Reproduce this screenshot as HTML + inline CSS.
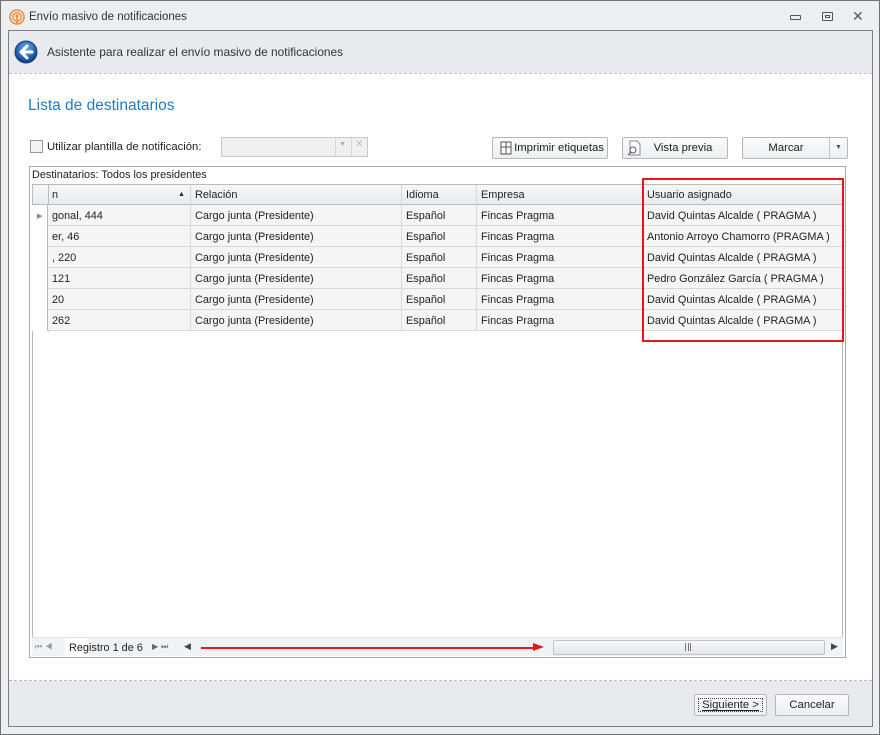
<!DOCTYPE html>
<html><head><meta charset="utf-8"><style>
*{box-sizing:border-box;margin:0;padding:0}
body{width:880px;height:735px;position:relative;background:#e8eaed;font-family:"Liberation Sans",sans-serif;font-size:11.3px;color:#222;overflow:hidden}
.a{position:absolute}
.btn{position:absolute;border:1px solid #b4b8be;border-radius:2px;background:linear-gradient(#fbfbfb,#eceef0);text-align:center;line-height:20px;font-size:11.3px;color:#222}
.row{position:absolute;left:32px;width:811px;height:21px;border-bottom:1px solid #d8d8d8;background:#f5f5f5}
.c{position:absolute;top:0;height:21px;line-height:22px;padding-left:4px;border-right:1px solid #d8d8d8;white-space:nowrap;overflow:hidden;font-size:10.9px}
</style></head><body>
<div class="a" style="left:0;top:0;width:880px;height:735px;border:1px solid #6e7277;background:#eceef0"></div>
<svg class="a" style="left:9px;top:9px" width="16" height="16"><circle cx="8" cy="8" r="7" fill="none" stroke="#f08a3c" stroke-width="1.6"/><circle cx="8" cy="8" r="4.3" fill="none" stroke="#f08a3c" stroke-width="1.4"/><circle cx="8" cy="7" r="1.6" fill="#f08a3c"/><rect x="7.2" y="8" width="1.6" height="7" fill="#f08a3c"/></svg>
<div class="a" style="left:29px;top:11px;font-size:11.5px;color:#333">Envío masivo de notificaciones</div>
<div class="a" style="left:790px;top:15px;width:11px;height:5px;border:1.3px solid #555;border-radius:1px"></div>
<div class="a" style="left:822px;top:12px;width:11px;height:9px;border:1.3px solid #555;border-radius:1px"><div style="margin:2px auto;width:5px;height:3px;border:1px solid #555"></div></div>
<div class="a" style="left:852px;top:8px;font-size:14px;color:#555">✕</div>
<div class="a" style="left:8px;top:30px;width:865px;height:697px;border:1px solid #7c8085;background:#e8eaed"></div>
<svg class="a" style="left:14px;top:40px" width="24" height="24"><defs><radialGradient id="g" cx="50%" cy="35%" r="60%"><stop offset="0" stop-color="#6fb3f5"/><stop offset="1" stop-color="#0d3f8f"/></radialGradient></defs><circle cx="12" cy="12" r="11" fill="url(#g)" stroke="#1a3f7a"/><path d="M13 6 L7 12 L13 18 M7 12 H18" stroke="#fff" stroke-width="3" fill="none" stroke-linecap="round" stroke-linejoin="round"/></svg>
<div class="a" style="left:47px;top:45px;font-size:11.9px;color:#333">Asistente para realizar el envío masivo de notificaciones</div>
<div class="a" style="left:9px;top:73px;width:863px;height:608px;background:#fff;border-top:1px dashed #c0c4c8;border-bottom:1px dashed #b8bcc0"></div>
<div class="a" style="left:28px;top:97px;font-size:15.5px;color:#1e7bc6">Lista de destinatarios</div>
<div class="a" style="left:30px;top:140px;width:13px;height:13px;border:1px solid #999;background:#f4f4f4"></div>
<div class="a" style="left:47px;top:141px">Utilizar plantilla de notificación:</div>
<div class="a" style="left:221px;top:137px;width:147px;height:20px;border:1px solid #c8c8c8;background:#f0f0f0"></div>
<div class="a" style="left:335px;top:138px;width:1px;height:18px;background:#d8d8d8"></div>
<div class="a" style="left:351px;top:138px;width:1px;height:18px;background:#d8d8d8"></div>
<div class="a" style="left:339px;top:141px;font-size:7px;color:#aaa">▼</div>
<div class="a" style="left:355px;top:139px;font-size:10px;color:#bbb">✕</div>
<div class="btn" style="left:492px;top:137px;width:116px;height:22px;padding-left:18px">Imprimir etiquetas</div>
<svg class="a" style="left:500px;top:141px" width="12" height="14"><rect x="1" y="1" width="10" height="12" fill="#fff" stroke="#555"/><path d="M6 1V13M1 6H11" stroke="#555"/></svg>
<div class="btn" style="left:622px;top:137px;width:106px;height:22px;padding-left:16px">Vista previa</div>
<svg class="a" style="left:627px;top:140px" width="14" height="16"><path d="M3 1H10L13 4V15H3Z" fill="#fff" stroke="#888"/><circle cx="6" cy="10" r="3" fill="none" stroke="#557"/><path d="M4 12L1 15" stroke="#557"/></svg>
<div class="btn" style="left:742px;top:137px;width:106px;height:22px;padding-right:18px">Marcar</div>
<div class="a" style="left:829px;top:138px;width:1px;height:20px;background:#c0c4c8"></div>
<div class="a" style="left:835px;top:144px;font-size:7px;color:#555">▼</div>
<div class="a" style="left:29px;top:166px;width:817px;height:492px;border:1px solid #a8acb2;background:#fff"></div>
<div class="a" style="left:32px;top:169px;font-size:10.9px">Destinatarios: Todos los presidentes</div>
<div class="a" style="left:32px;top:184px;width:811px;height:21px;background:linear-gradient(#f6f7f9,#e9ebee);border-top:1px solid #b8bcc2;border-bottom:1px solid #b8bcc2"></div>
<div class="a" style="left:32px;top:184px;width:1px;height:453px;background:#b8bcc2"></div>
<div class="a" style="left:842px;top:184px;width:1px;height:453px;background:#b8bcc2"></div>
<div class="a" style="left:48px;top:184px;width:1px;height:148px;background:#b8bcc2"></div>
<div style="position:absolute;left:0;top:185px">
<div class="c" style="left:48px;width:143px;top:0;line-height:20px">n<span style="position:absolute;left:130px;font-size:7px">▲</span></div>
<div class="c" style="left:191px;width:211px;line-height:20px">Relación</div>
<div class="c" style="left:402px;width:75px;line-height:20px">Idioma</div>
<div class="c" style="left:477px;width:166px;line-height:20px">Empresa</div>
<div class="c" style="left:643px;width:200px;border:0;line-height:20px">Usuario asignado</div>
</div>
<div style="position:absolute;left:0;top:205px;width:880px">
<div class="row" style="top:0"></div><div class="row" style="top:21px"></div><div class="row" style="top:42px"></div><div class="row" style="top:63px"></div><div class="row" style="top:84px"></div><div class="row" style="top:105px"></div>
</div>
<div class="a" style="left:32px;top:205px;width:16px;height:126px;background:#fff;border-right:1px solid #b8bcc2"></div>
<div class="a" style="left:37px;top:212px;font-size:7px;color:#888">▶</div>
<div style="position:absolute;left:0;top:205px">
<div class="c" style="left:48px;width:143px;top:0">gonal, 444</div><div class="c" style="left:191px;width:211px;top:0">Cargo junta (Presidente)</div><div class="c" style="left:402px;width:75px;top:0">Español</div><div class="c" style="left:477px;width:166px;top:0">Fincas Pragma</div><div class="c" style="left:643px;width:200px;top:0;border:0">David Quintas Alcalde ( PRAGMA )</div>
<div class="c" style="left:48px;width:143px;top:21px">er, 46</div><div class="c" style="left:191px;width:211px;top:21px">Cargo junta (Presidente)</div><div class="c" style="left:402px;width:75px;top:21px">Español</div><div class="c" style="left:477px;width:166px;top:21px">Fincas Pragma</div><div class="c" style="left:643px;width:200px;top:21px;border:0">Antonio Arroyo Chamorro (PRAGMA )</div>
<div class="c" style="left:48px;width:143px;top:42px">, 220</div><div class="c" style="left:191px;width:211px;top:42px">Cargo junta (Presidente)</div><div class="c" style="left:402px;width:75px;top:42px">Español</div><div class="c" style="left:477px;width:166px;top:42px">Fincas Pragma</div><div class="c" style="left:643px;width:200px;top:42px;border:0">David Quintas Alcalde ( PRAGMA )</div>
<div class="c" style="left:48px;width:143px;top:63px">121</div><div class="c" style="left:191px;width:211px;top:63px">Cargo junta (Presidente)</div><div class="c" style="left:402px;width:75px;top:63px">Español</div><div class="c" style="left:477px;width:166px;top:63px">Fincas Pragma</div><div class="c" style="left:643px;width:200px;top:63px;border:0">Pedro González García ( PRAGMA )</div>
<div class="c" style="left:48px;width:143px;top:84px">20</div><div class="c" style="left:191px;width:211px;top:84px">Cargo junta (Presidente)</div><div class="c" style="left:402px;width:75px;top:84px">Español</div><div class="c" style="left:477px;width:166px;top:84px">Fincas Pragma</div><div class="c" style="left:643px;width:200px;top:84px;border:0">David Quintas Alcalde ( PRAGMA )</div>
<div class="c" style="left:48px;width:143px;top:105px">262</div><div class="c" style="left:191px;width:211px;top:105px">Cargo junta (Presidente)</div><div class="c" style="left:402px;width:75px;top:105px">Español</div><div class="c" style="left:477px;width:166px;top:105px">Fincas Pragma</div><div class="c" style="left:643px;width:200px;top:105px;border:0">David Quintas Alcalde ( PRAGMA )</div>
</div>
<div class="a" style="left:642px;top:178px;width:202px;height:164px;border:2px solid #e8161a"></div>
<div class="a" style="left:32px;top:637px;width:811px;height:19px;background:#f1f2f4;border-top:1px solid #dfe1e4"></div>
<div class="a" style="left:35px;top:642px;font-size:8px;color:#999;letter-spacing:3px">⏮◀</div>
<div class="a" style="left:65px;top:638px;width:23px;height:18px;background:#fff"></div>
<div class="a" style="left:69px;top:642px;font-size:10.9px">Registro 1 de 6</div>
<div class="a" style="left:152px;top:642px;font-size:8px;color:#666;letter-spacing:3px">▶⏭</div>
<div class="a" style="left:184px;top:641px;font-size:9px;color:#444">◀</div>
<div class="a" style="left:201px;top:647px;width:335px;height:2px;background:#e8161a"></div>
<div class="a" style="left:533px;top:643px;width:0;height:0;border-left:11px solid #e8161a;border-top:4px solid transparent;border-bottom:4px solid transparent"></div>
<div class="a" style="left:553px;top:640px;width:272px;height:15px;border:1px solid #c0c4c8;border-radius:2px;background:linear-gradient(#f8f8f8,#e4e6e8)"></div>
<div class="a" style="left:685px;top:643px;width:6px;height:8px;border-left:1px solid #777;border-right:1px solid #777"><div style="margin-left:1.5px;width:1px;height:8px;background:#777"></div></div>
<div class="a" style="left:831px;top:641px;font-size:9px;color:#444">▶</div>
<div class="btn" style="left:694px;top:694px;width:73px;height:22px;"><span style="border:1px dotted #444;padding:0 3px;text-decoration:underline 1px;text-underline-offset:2px">Siguiente &gt;</span></div>
<div class="btn" style="left:775px;top:694px;width:74px;height:22px">Cancelar</div>
</body></html>
